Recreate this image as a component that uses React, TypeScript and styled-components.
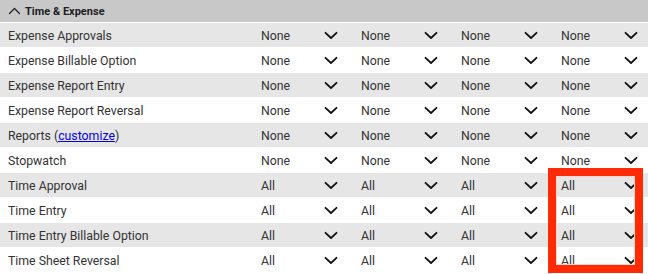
import React from "react";
import styled, { createGlobalStyle } from "styled-components";

const GlobalStyle = createGlobalStyle`
    body {
        margin: 0;
        background: #ffffff;
        font-family: Roboto, "Liberation Sans", sans-serif;
    }
`

type Row = {
    label: string
    value: string
    link?: boolean
}

const rows: Row[] = [
    { label: "Expense Approvals", value: "None" },
    { label: "Expense Billable Option", value: "None" },
    { label: "Expense Report Entry", value: "None" },
    { label: "Expense Report Reversal", value: "None" },
    { label: "Reports", value: "None", link: true },
    { label: "Stopwatch", value: "None" },
    { label: "Time Approval", value: "All" },
    { label: "Time Entry", value: "All" },
    { label: "Time Entry Billable Option", value: "All" },
    { label: "Time Sheet Reversal", value: "All" },
]

function ChevronDown() {
    return (
        <svg width="14" height="9" viewBox="0 0 14 9" fill="none">
            <path d="M1.5 1.8 L7 7 L12.5 1.8" stroke="#111" strokeWidth="1.8" strokeLinecap="round" strokeLinejoin="round" />
        </svg>
    )
}

function ChevronUp() {
    return (
        <svg width="13" height="8" viewBox="0 0 13 8" fill="none">
            <path d="M1.5 6.5 L6.5 1.5 L11.5 6.5" stroke="#222" strokeWidth="1.3" strokeLinecap="round" strokeLinejoin="round" />
        </svg>
    )
}

export default function App() {
    return (
        <>
            <GlobalStyle />
            <Panel>
                <Header>
                    <ChevronUp />
                    <HeaderTitle>Time &amp; Expense</HeaderTitle>
                </Header>
                {rows.map((row, i) => (
                    <TableRow key={row.label} $shaded={i % 2 === 0}>
                        <Label>
                            {row.label}
                            {row.link && (
                                <> (<LinkText href="#">customize</LinkText>)</>
                            )}
                        </Label>
                        {[0, 1, 2, 3].map((c) => (
                            <Select key={c}>
                                <span>{row.value}</span>
                                <ChevronDown />
                            </Select>
                        ))}
                    </TableRow>
                ))}
                <Highlight />
            </Panel>
        </>
    )
}

const Panel = styled.div`
    position: relative;
    width: 648px;
    height: 274px;
    overflow: hidden;
    color: #333333;
    font-size: 12.3px;
`
const Header = styled.div`
    display: flex;
    align-items: center;
    gap: 4px;
    height: 23px;
    padding-left: 8px;
    background: #c8c8c8;
    border-bottom: 1px solid #ffffff;
    box-sizing: border-box;
`
const HeaderTitle = styled.span`
    font-weight: 700;
    font-size: 11px;
    color: #1e1e1e;
`
const TableRow = styled.div<{ $shaded: boolean }>`
    display: grid;
    grid-template-columns: 254px repeat(4, 100px);
    align-items: center;
    height: 25px;
    padding-top: 1px;
    box-sizing: border-box;
    border-bottom: 1px solid #ffffff;
    background: ${props => props.$shaded ? "#e6e6e6" : "#ffffff"};
`
const Label = styled.div`
    padding-left: 8px;
    white-space: nowrap;
`
const LinkText = styled.a`
    color: #0000ee;
    text-decoration: underline;
`
const Select = styled.div`
    display: flex;
    align-items: center;
    justify-content: space-between;
    padding: 0 16px 0 7px;
`
const Highlight = styled.div`
    position: absolute;
    left: 548px;
    top: 168px;
    width: 95px;
    height: 105px;
    box-sizing: border-box;
    border: 8px solid #ff2a06;
    box-shadow: inset 0 0 0 1px #ffd6cc;
`
